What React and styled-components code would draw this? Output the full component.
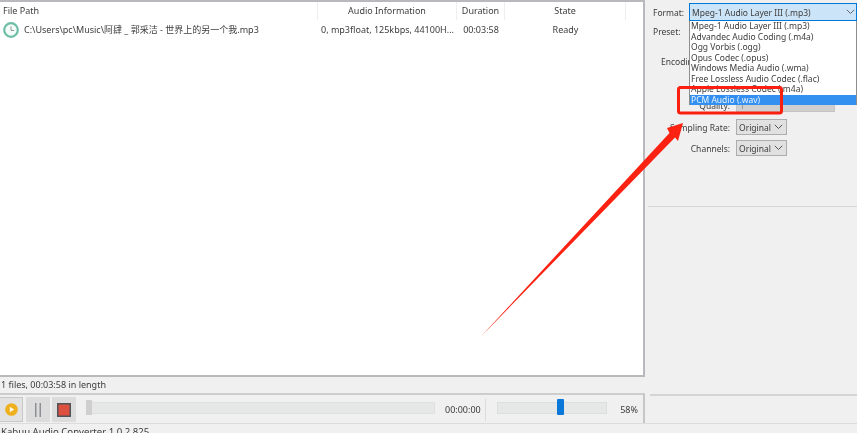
import styled, { createGlobalStyle } from "styled-components"

const GlobalStyle = createGlobalStyle`
html, body {
  margin: 0;
  padding: 0;
  height: 433px;
  overflow: hidden;
  background: #f0f0f0;
}
#root {
  height: 433px;
}
* {
  box-sizing: border-box;
}
`

const formats = [
   "Mpeg-1 Audio Layer III (.mp3)",
   "Advandec Audio Coding (.m4a)",
   "Ogg Vorbis (.ogg)",
   "Opus Codec (.opus)",
   "Windows Media Audio (.wma)",
   "Free Lossless Audio Codec (.flac)",
   "Apple Lossless Codec (.m4a)",
   "PCM Audio (.wav)",
]

const ClockIcon = () => (
   <svg width="16" height="16" viewBox="0 0 16 16">
      <circle cx="8" cy="8" r="6.8" fill="#f4fbf8" stroke="#6cbfa6" strokeWidth="2.2" />
      <path d="M8 4.5V8.5H11" fill="none" stroke="#8a9a96" strokeWidth="1" />
   </svg>
)

const PlayIcon = () => (
   <svg width="13" height="13" viewBox="0 0 14 14">
      <circle cx="7" cy="7" r="6.8" fill="#eeb01c" />
      <path d="M5.2 4L10 7L5.2 10Z" fill="#fdf6e0" />
   </svg>
)

const PauseIcon = () => (
   <svg width="8" height="14" viewBox="0 0 8 14">
      <path d="M1 0H2.5V14H1ZM5.5 0H7V14H5.5Z" fill="#8c9094" />
   </svg>
)

const StopIcon = () => (
   <svg width="14" height="14" viewBox="0 0 14 14">
      <rect x="0.75" y="0.75" width="12.5" height="12.5" fill="#dd4f3f" stroke="#4d5358" strokeWidth="1.5" />
   </svg>
)

const Chevron = ({ color }) => (
   <svg width="9" height="6" viewBox="0 0 9 6">
      <path d="M0.8 0.8L4.5 4.5L8.2 0.8" fill="none" stroke={color || "#555"} strokeWidth="1" />
   </svg>
)

const App = () => {
   return (
      <Page>
         <GlobalStyle />
         <Main>
            <ListPanel>
               <HeaderRow>
                  <HeadCell $w={318} $left>File Path</HeadCell>
                  <HeadCell $w={139}>Audio Information</HeadCell>
                  <HeadCell $w={48}>Duration</HeadCell>
                  <HeadCell $w={121}>State</HeadCell>
               </HeaderRow>
               <FileRow>
                  <PathCell>
                     <ClockIcon />
                     <PathText>C:\Users\pc\Music\阿肆 _ 郭采洁 - 世界上的另一个我.mp3</PathText>
                  </PathCell>
                  <DataCell $w={139}>0, mp3float, 125kbps, 44100H...</DataCell>
                  <DataCell $w={48}>00:03:58</DataCell>
                  <DataCell $w={121}>Ready</DataCell>
               </FileRow>
            </ListPanel>
            <SidePanel>
               <FormatRow>
                  <Label>Format:</Label>
                  <FormatSelect>
                     <span>Mpeg-1 Audio Layer III (.mp3)</span>
                     <Chevron color="#667" />
                  </FormatSelect>
               </FormatRow>
               <PresetLabel>Preset:</PresetLabel>
               <EncodingLabel>Encoding</EncodingLabel>
               <SettingRow $mt={30}>
                  <SettingLabel>Quality:</SettingLabel>
                  <DisabledSelect>1</DisabledSelect>
               </SettingRow>
               <SettingRow $mt={7}>
                  <SettingLabel>Sampling Rate:</SettingLabel>
                  <SmallSelect>
                     <span>Original</span>
                     <Chevron />
                  </SmallSelect>
               </SettingRow>
               <SettingRow $mt={5}>
                  <SettingLabel>Channels:</SettingLabel>
                  <SmallSelect>
                     <span>Original</span>
                     <Chevron />
                  </SmallSelect>
               </SettingRow>
               <Divider $mt={50} />
               <FormatMenu>
                  {formats.map((name, index) => (
                     <MenuItem key={index} $active={index === formats.length - 1}>{name}</MenuItem>
                  ))}
               </FormatMenu>
            </SidePanel>
         </Main>
         <Summary>1 files, 00:03:58 in length</Summary>
         <PlayerRow>
            <Player>
               <PlayButton><PlayIcon /></PlayButton>
               <PauseButton><PauseIcon /></PauseButton>
               <StopButton><StopIcon /></StopButton>
               <SeekTrack><SeekThumb /></SeekTrack>
               <Time>00:00:00</Time>
               <VolumeTrack><VolumeThumb /></VolumeTrack>
               <Percent>58%</Percent>
            </Player>
            <PlayerSide />
         </PlayerRow>
         <StatusBar>Kabuu Audio Converter 1.0.2.825</StatusBar>
         <Annotation width="857" height="433" viewBox="0 0 857 433">
            <rect x="678.5" y="87.5" width="103" height="25.5" rx="2" fill="none" stroke="#fb1f10" strokeWidth="3" />
            <path d="M480 337.5L669.5 133L667 128L683 123L678 141L675 137.5Z" fill="#fb2212" />
         </Annotation>
      </Page>
   )
}

const Page = styled.div`
position:relative;
width:857px;
height:433px;
overflow:hidden;
background:#f0f0f0;
color:#3c3c3c;
font-family:"Noto Sans","Noto Sans CJK SC",sans-serif;
font-size:9px;
filter:blur(0.4px);
`
const Main = styled.div`
display:flex;
height:377px;
`
const ListPanel = styled.div`
width:645px;
height:377px;
background:#fff;
border-top:2px solid #b9b9bd;
border-right:2px solid #b9b9bd;
border-bottom:2px solid #b9b9bd;
`
const HeaderRow = styled.div`
display:flex;
height:18px;
`
const HeadCell = styled.div`
width:${(props) => props.$w}px;
line-height:17px;
padding-left:${(props) => (props.$left ? "3px" : "0")};
text-align:${(props) => (props.$left ? "left" : "center")};
border-right:1px solid #eeeeee;
`
const FileRow = styled.div`
display:flex;
align-items:center;
height:19px;
`
const PathCell = styled.div`
width:318px;
display:flex;
align-items:center;
gap:5px;
padding-left:3px;
`
const PathText = styled.span`
white-space:nowrap;
`
const DataCell = styled.div`
width:${(props) => props.$w}px;
text-align:center;
white-space:nowrap;
`
const SidePanel = styled.div`
position:relative;
flex:1;
padding:3px 0 0 3px;
font-size:8.5px;
`
const FormatRow = styled.div`
display:flex;
align-items:center;
height:18px;
padding-left:5px;
gap:13px;
`
const Label = styled.span`
width:23px;
white-space:nowrap;
`
const FormatSelect = styled.div`
flex:1;
height:18px;
display:flex;
align-items:center;
justify-content:space-between;
padding:0 1px 0 2px;
background:#cce4f7;
border:1px solid #0078d7;
white-space:nowrap;
`
const PresetLabel = styled.div`
margin:5px 0 0 5px;
line-height:12px;
`
const EncodingLabel = styled.div`
margin:18px 0 0 13px;
line-height:12px;
`
const SettingRow = styled.div`
display:flex;
align-items:center;
gap:6px;
margin-top:${(props) => props.$mt}px;
`
const SettingLabel = styled.span`
width:82px;
text-align:right;
white-space:nowrap;
`
const DisabledSelect = styled.div`
width:99px;
height:14px;
padding-left:3px;
line-height:13px;
color:#8c8c8c;
background:#cfcfcf;
border:1px solid #c4c4c4;
`
const SmallSelect = styled.div`
width:51px;
height:16px;
display:flex;
align-items:center;
justify-content:space-between;
padding:0 3px 0 2px;
background:#e1e1e1;
border:1px solid #adadad;
`
const Divider = styled.div`
height:1px;
margin-top:${(props) => props.$mt}px;
background:#d6d6d6;
`
const FormatMenu = styled.div`
position:absolute;
left:44px;
top:21px;
width:168px;
height:84px;
background:#fff;
border:1px solid #8d8d8d;
border-top:none;
`
const MenuItem = styled.div`
height:10.5px;
padding-left:1px;
line-height:10.5px;
white-space:nowrap;
color:${(props) => (props.$active ? "#eaf4ff" : "#3c3c3c")};
background:${(props) => (props.$active ? "#3390f0" : "transparent")};
`
const Summary = styled.div`
height:16px;
padding-left:1px;
line-height:16px;
`
const PlayerRow = styled.div`
display:flex;
height:31px;
border-bottom:1px solid #dcdcdc;
`
const Player = styled.div`
width:645px;
display:flex;
align-items:center;
padding:1px 5px 0 0;
border-top:2px solid #cdcdcd;
border-right:2px solid #c6c6c6;
`
const PlayerSide = styled.div`
flex:1;
height:2px;
margin:1px 0 0 5px;
background:#d4d4d4;
`
const PlayButton = styled.div`
width:23px;
height:25px;
display:flex;
align-items:center;
justify-content:center;
background:#e2e2e2;
border:1px solid #c8c8c8;
border-left:none;
`
const PauseButton = styled.div`
width:24px;
height:25px;
margin-left:3px;
display:flex;
align-items:center;
justify-content:center;
background:#dcdcdc;
`
const StopButton = styled(PauseButton)`
margin-left:2px;
`
const SeekTrack = styled.div`
width:349px;
height:12px;
margin:0 0 4px 10px;
background:#e6e8e8;
border:1px solid #e0e0e0;
`
const SeekThumb = styled.div`
width:6px;
height:15px;
margin:-3px 0 0 -1px;
background:#cfcfcf;
`
const Time = styled.div`
width:41px;
margin-left:10px;
line-height:22px;
border-right:1px solid #dcdcdc;
white-space:nowrap;
`
const VolumeTrack = styled.div`
position:relative;
width:110px;
height:12px;
margin:0 0 4px 11px;
background:#e6e8e8;
border:1px solid #dedede;
`
const VolumeThumb = styled.div`
position:absolute;
left:59px;
top:-4px;
width:7px;
height:16px;
border-radius:1px;
background:#0a78d8;
`
const Percent = styled.div`
margin-left:auto;
white-space:nowrap;
`
const StatusBar = styled.div`
padding-left:1px;
height:9px;
line-height:15px;
font-size:9.6px;
white-space:nowrap;
`
const Annotation = styled.svg`
position:absolute;
left:0;
top:0;
pointer-events:none;
`

export default App
